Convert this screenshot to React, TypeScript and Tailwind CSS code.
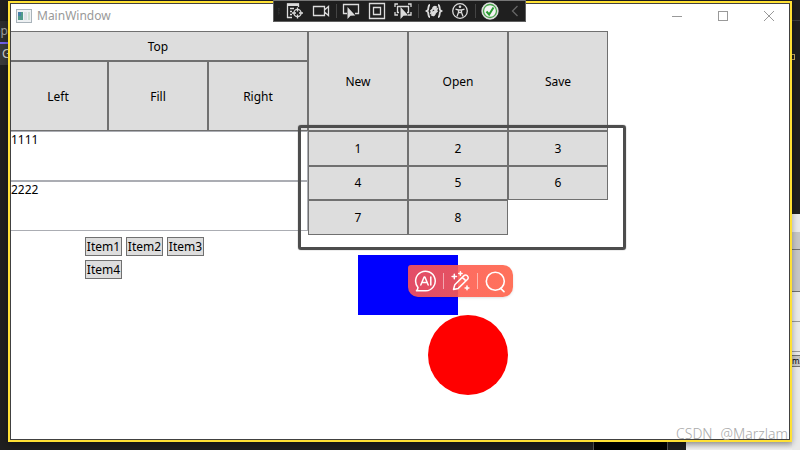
import type { ReactNode } from "react";

const cell =
  "flex items-center justify-center border border-[#707070] bg-[#dddddd] text-[12px] leading-4 text-black";

function Cell({ children, className }: { children: ReactNode; className: string }) {
  return (
    <button type="button" className={`${cell} ${className}`}>
      {children}
    </button>
  );
}

function CaptionButton({ label, children }: { label: string; children: ReactNode }) {
  return (
    <button type="button" aria-label={label} className="flex h-full w-[46px] items-center justify-center text-[#999999]">
      <svg width="12" height="12" viewBox="0 0 12 12" fill="none" stroke="currentColor" shapeRendering="crispEdges">
        {children}
      </svg>
    </button>
  );
}

function TitleBar() {
  return (
    <header className="flex h-[30px] items-center pl-2">
      <svg width="16" height="14" viewBox="0 0 16 14" className="shrink-0">
        <rect x="0.5" y="0.5" width="15" height="13" fill="#eef1f3" stroke="#a9b3ba" />
        <rect x="2" y="3" width="5" height="8" fill="#4f9a8a" />
        <rect x="2" y="3" width="3" height="4" fill="#4680a8" />
        <rect x="8" y="3" width="3" height="8" fill="#dde1e4" />
        <rect x="12" y="3" width="2" height="8" fill="#cfe0d4" />
      </svg>
      <h1 className="ml-[5px] flex-1 text-[12px] leading-4 text-[#999999]">MainWindow</h1>
      <CaptionButton label="Minimize">
        <path d="M1 6.5h10" />
      </CaptionButton>
      <CaptionButton label="Maximize">
        <rect x="1.5" y="1.5" width="9" height="9" />
      </CaptionButton>
      <CaptionButton label="Close">
        <path d="M1 1l10 10M11 1L1 11" shapeRendering="auto" />
      </CaptionButton>
    </header>
  );
}

function DockAndText() {
  return (
    <div>
      <Cell className="h-[30px] w-full pt-0.5">Top</Cell>
      <div className="grid h-[70px] grid-cols-3">
        <Cell className="pt-0.5">Left</Cell>
        <Cell className="pt-0.5">Fill</Cell>
        <Cell className="pt-0.5">Right</Cell>
      </div>
      <textarea
        aria-label="First text"
        defaultValue="1111"
        className="block h-[50px] w-full resize-none border border-[#abadb3] bg-white pl-0.5 text-[12px] leading-4 text-black outline-none"
      />
      <textarea
        aria-label="Second text"
        defaultValue="2222"
        className="block h-[50px] w-full resize-none border border-[#abadb3] bg-white pl-0.5 text-[12px] leading-4 text-black outline-none"
      />
      <div className="ml-[77px] flex w-[130px] flex-wrap gap-1 pt-[6px]">
        {["Item1", "Item2", "Item3", "Item4"].map((item) => (
          <Cell key={item} className="h-[19px] w-[37px]">
            {item}
          </Cell>
        ))}
      </div>
    </div>
  );
}

function QuickTools() {
  return (
    <div className="absolute top-[10px] left-[50px] flex h-8 w-[105px] items-center justify-between rounded-[10px] rounded-tl-[3px] bg-linear-to-r from-[#fc5556]/90 to-[#ff6248]/90 px-[6px] text-white shadow-sm">
      <button type="button" aria-label="AI">
        <svg width="23" height="23" viewBox="0 0 23 23" fill="none" stroke="currentColor" strokeWidth="1.5" strokeLinecap="round" strokeLinejoin="round">
          <path d="M2.5 20.8h9.3A9.8 9.8 0 1 0 4 17.4c-.1 1.4-.6 2.6-1.5 3.4z" />
          <path d="M6.8 15l3.3-8h.8l3.3 8M8 12.4h5M16.8 7v8" />
        </svg>
      </button>
      <span className="h-4 w-px bg-white/50" />
      <button type="button" aria-label="Edit">
        <svg width="20" height="20" viewBox="0 0 20 20" fill="none" stroke="currentColor" strokeWidth="1.5" strokeLinecap="round" strokeLinejoin="round">
          <path d="M2.5 18.4l1.3-4.6L13 4.6a2.1 2.1 0 0 1 3 0l.6.6a2.1 2.1 0 0 1 0 3L7.2 17.4zM11.4 6.4l3.5 3.5" />
          <path d="M3.3 3.3v4.4M1.1 5.5h4.4M9.4.8v3.4M7.7 2.5h3.4M16 15v3.8M14.1 16.9h3.8" />
        </svg>
      </button>
      <span className="h-4 w-px bg-white/50" />
      <button type="button" aria-label="Search">
        <svg width="23" height="23" viewBox="0 0 23 23" fill="none" stroke="currentColor" strokeWidth="1.6" strokeLinecap="round">
          <circle cx="11.3" cy="11.3" r="9" />
          <path d="M16.6 18.4l3.4 3.2" />
        </svg>
      </button>
    </div>
  );
}

function ButtonsAndCanvas() {
  return (
    <div className="relative">
      <div className="grid h-[100px] grid-cols-3">
        <Cell className="pt-0.5">New</Cell>
        <Cell className="pt-0.5">Open</Cell>
        <Cell className="pt-0.5">Save</Cell>
      </div>
      <div className="grid grid-cols-3 grid-rows-[35px_34px_35px]">
        {[1, 2, 3, 4, 5, 6, 7, 8].map((n) => (
          <Cell key={n} className="">
            {n}
          </Cell>
        ))}
      </div>
      <div className="relative mt-5 h-[140px]">
        <div className="absolute top-0 left-[50px] h-[60px] w-[100px] bg-[#0000ff]" />
        <div className="absolute top-[60px] left-[120px] size-20 rounded-full bg-[#ff0000]" />
        <div className="absolute top-0 left-[50px]">
          <QuickTools />
        </div>
      </div>
      <div className="pointer-events-none absolute top-[94px] left-[-10px] h-[125px] w-[328px] rounded-[3px] border-3 border-[#4d4d4d] shadow-[0_0_1px_#4d4d4d]" />
    </div>
  );
}

function Tool({ label, children }: { label: string; children: ReactNode }) {
  return (
    <button type="button" aria-label={label} className="flex size-[18px] items-center justify-center">
      <svg width="18" height="18" viewBox="0 0 18 18" fill="none" stroke="currentColor" strokeWidth="1.3">
        {children}
      </svg>
    </button>
  );
}

function DebugToolbar() {
  return (
    <div className="absolute top-0 left-[273px] z-10 flex h-[22px] w-[253px] items-center border border-[#606060] border-t-[#777777] bg-[#1f1f1f] pl-1 text-[#dcdcdc]">
      <svg width="6" height="18" viewBox="0 0 6 18" fill="#777777">
        {[0, 4, 8, 12, 16].map((y) => (
          <g key={y}>
            <rect x="0" y={y} width="1" height="1" />
            <rect x="4" y={y} width="1" height="1" />
            <rect x="2" y={y + 2} width="1" height="1" />
          </g>
        ))}
      </svg>
      <div className="ml-[6px] flex items-center gap-2">
        <Tool label="Live visual tree">
          <path d="M1.5 16V2h11v3M1 2.5h12M4 6.5h4M4 9.5h2M4 12.5h2M1 15.5h5" />
          <path d="M1 2.8h12" strokeWidth="2.4" />
          <circle cx="11.5" cy="11" r="3.6" />
          <path d="M11.5 5.5v4M11.5 12.5v4M6 11h4M13 11h4" />
        </Tool>
        <Tool label="Record">
          <path d="M1.5 4.5h11v9h-11zM12.500 8l4-3.500v9l-4-3.500" />
        </Tool>
      </div>
      <span className="ml-[6px] h-[14px] w-px bg-[#444444]" />
      <div className="ml-[6px] flex items-center gap-2">
        <Tool label="Select element">
          <path d="M5 11.500H1.500v-9h15v9H13" />
          <path d="M5.500 5v12l3-3.200 4.800-.3z" fill="currentColor" stroke="none" />
        </Tool>
        <Tool label="Layout adorners">
          <path d="M1.500 1.500h15v15h-15zM5.500 5.500h7v7h-7z" />
        </Tool>
        <Tool label="Track focused element">
          <path d="M1 5V2h3M14 2h3v3M1 10v3h3M14 13h3v-3M5 10.500H3.500v-6h11v6H13" />
          <path d="M6.500 5v12l3-3.200 4.800-.3z" fill="currentColor" stroke="none" />
        </Tool>
      </div>
      <span className="ml-[6px] h-[14px] w-px bg-[#444444]" />
      <div className="ml-[6px] flex items-center gap-2">
        <Tool label="Binding failures">
          <path d="M5 3C3 3 3.500 7 3 8L1.500 9 3 10c.5 1 0 5 2 5M13 3c2 0 1.500 4 2 5l1.500 1-1.500 1c-.5 1 0 5-2 5" strokeWidth="1.800" />
          <path d="M5.500 9.500L8 7a2 2 0 0 1 3-2l-1.500 2 1.500 1 1.700-1.800M12.500 8.500L10 11a2 2 0 0 1-3 2l1.500-2-1.500-1-1.700 1.800M7 12l4.500-5" strokeWidth="1.800" />
        </Tool>
        <Tool label="Accessibility checker">
          <circle cx="9" cy="9" r="7.300" />
          <circle cx="9" cy="4.800" r="1.300" fill="currentColor" stroke="none" />
          <path d="M4.500 7.200l3 .8h3l3-.8M7.500 8v2.500L6 14.500M10.500 8v2.500l1.500 4M7.500 10.500h3" />
        </Tool>
      </div>
      <span className="ml-[6px] h-[14px] w-px bg-[#444444]" />
      <div className="ml-[6px] flex items-center gap-2">
        <Tool label="Hot reload">
          <circle cx="9" cy="9" r="8" fill="#f3f3f3" stroke="#dcdcdc" />
          <circle cx="9" cy="9" r="6.500" stroke="#4aa64c" />
          <path d="M5.500 9.500l2.600 3 4.400-7" stroke="#289a30" strokeWidth="2" />
        </Tool>
        <Tool label="Collapse">
          <path d="M10.500 4L5.500 9l5 5" stroke="#666666" />
        </Tool>
      </div>
    </div>
  );
}

function Backdrop() {
  return (
    <div aria-hidden="true" className="absolute inset-0 overflow-hidden bg-[#1f1f1f]">
      <div className="absolute top-[21px] left-0 h-11 w-2 overflow-hidden bg-[#3a3a3a] text-[12px] leading-5 text-[#d0d0d0]">
        <div className="flex h-[23px] justify-end border-b-2 border-[#7160e8] bg-[#2d2d2d] text-[#a0a0a0]">op</div>
        <div className="pl-[2px]">G</div>
      </div>
      <div className="absolute top-5 right-0 h-px w-2 bg-[#3d3d3d]" />
      <div className="absolute top-[54px] right-[5px] h-[6px] w-[6px] border border-[#c8a860]" />
      <div className="absolute bottom-0 left-[593px] h-2 w-[75px] border-x border-[#555555] bg-black" />
      <div className="absolute right-0 bottom-0 h-2 w-[114px] bg-linear-to-b from-[#d4d4d4] to-[#f0f0f0]" />
      <div className="absolute top-[214px] right-0 bottom-0 w-2 bg-[#e9e9e9]">
        <div className="mt-[18px] h-[18px] border-b border-[#707070] bg-[#c6c6c6]" />
        <div className="h-[42px] border-b border-[#707070] bg-[#c6c6c6]" />
        <div className="h-[30px] border-b border-[#999999]" />
        <div className="h-[30px] border-b border-[#999999]" />
        <div className="mt-[3px] flex h-3 items-center overflow-hidden border-y border-[#707070] bg-[#c6c6c6] text-[8px] leading-3 text-black">
          m3
        </div>
      </div>
    </div>
  );
}

export default function App() {
  return (
    <div className="relative flex min-h-screen flex-col px-2 pt-px pb-2 font-['Noto_Sans','Open_Sans',sans-serif]">
      <Backdrop />
      <main className="relative flex-1 bg-white shadow-[0_2px_6px_#00000055]">
        <TitleBar />
        <div className="grid grid-cols-[300px_300px_1fr]">
          <DockAndText />
          <ButtonsAndCanvas />
        </div>
        <div className="pointer-events-none absolute inset-0 border-2 border-[#ffe135]">
          <div className="h-full border border-[#414141]" />
        </div>
      </main>
      <DebugToolbar />
      <p className="absolute right-3 bottom-[6px] flex gap-2 text-[14px] leading-5 font-light text-[#aaaaaa]">
        <span>CSDN</span>
        <span>@Marzlam</span>
      </p>
    </div>
  );
}
